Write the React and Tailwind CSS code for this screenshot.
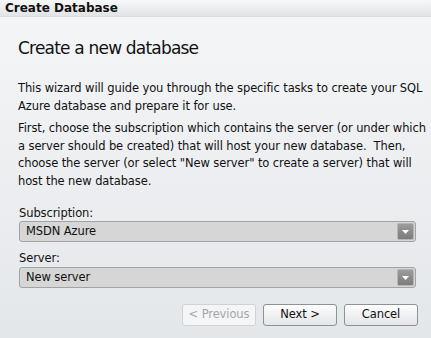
import React from 'react';

const font = { fontFamily: '"DejaVu Sans", Verdana, sans-serif', letterSpacing: '-0.1px' };

const Select = ({ value }) => (
  <div className="flex items-center h-[21px] rounded-[3px] border border-[#a3a3a3] bg-[#d6d6d6] pl-[6px] pr-[1px]">
    <span className="flex-1 text-[11.5px] text-[#111] leading-none">{value}</span>
    <span className="flex items-center justify-center w-[17px] h-[17px] rounded-[2px] border border-[#b5b5b5] bg-gradient-to-b from-[#9c9c9c] to-[#7c7c7c]">
      <svg width="7" height="4" viewBox="0 0 7 4">
        <path d="M0 0h7L3.5 4z" fill="#fff" />
      </svg>
    </span>
  </div>
);

const Btn = ({ children, disabled }) => (
  <button
    className={`w-[74px] h-[22px] rounded-[3px] border text-[11.5px] leading-none ${
      disabled
        ? 'border-[#d0d3d6] bg-[#f4f5f6] text-[#a3a7ab]'
        : 'border-[#8d9296] bg-gradient-to-b from-[#fdfdfd] to-[#e3e5e7] text-[#111]'
    }`}
  >
    {children}
  </button>
);

export default function App() {
  return (
    <div className="w-[431px] h-[338px] flex flex-col overflow-hidden" style={font}>
      <div className="h-[17px] flex items-center px-[5px] bg-gradient-to-b from-[#f6f7f8] to-[#e1e4e7] border-b border-[#d9dde0]">
        <span className="text-[12px] font-bold text-[#111] tracking-normal">Create Database</span>
      </div>
      <div className="flex-1 flex flex-col pl-[18px] bg-gradient-to-b from-[#f4f5f7] to-[#e4e7ea] text-[#111]">
        <h1 className="mt-[20px] text-[17px] leading-[22px] tracking-[-0.8px]">Create a new database</h1>
        <p className="mt-[21px] text-[11.5px] leading-[17.5px] whitespace-nowrap">
          This wizard will guide you through the specific tasks to create your SQL
          <br />
          Azure database and prepare it for use.
        </p>
        <p className="mt-[5px] text-[11.5px] leading-[17.5px] whitespace-nowrap">
          First, choose the subscription which contains the server (or under which
          <br />
          a server should be created) that will host your new database.&nbsp; Then,
          <br />
          choose the server (or select "New server" to create a server) that will
          <br />
          host the new database.
        </p>
        <label className="mt-[16px] text-[11.5px] leading-[15px] pl-[1px]">Subscription:</label>
        <div className="mt-[0px] pl-[1px] pr-[15px]">
          <Select value="MSDN Azure" />
        </div>
        <label className="mt-[9px] text-[11.5px] leading-[15px] pl-[1px]">Server:</label>
        <div className="mt-[1px] pl-[1px] pr-[15px]">
          <Select value="New server" />
        </div>
        <div className="mt-[16px] flex justify-end gap-[7px] pr-[13px]">
          <Btn disabled>&lt; Previous</Btn>
          <Btn>Next &gt;</Btn>
          <Btn>Cancel</Btn>
        </div>
      </div>
    </div>
  );
}
